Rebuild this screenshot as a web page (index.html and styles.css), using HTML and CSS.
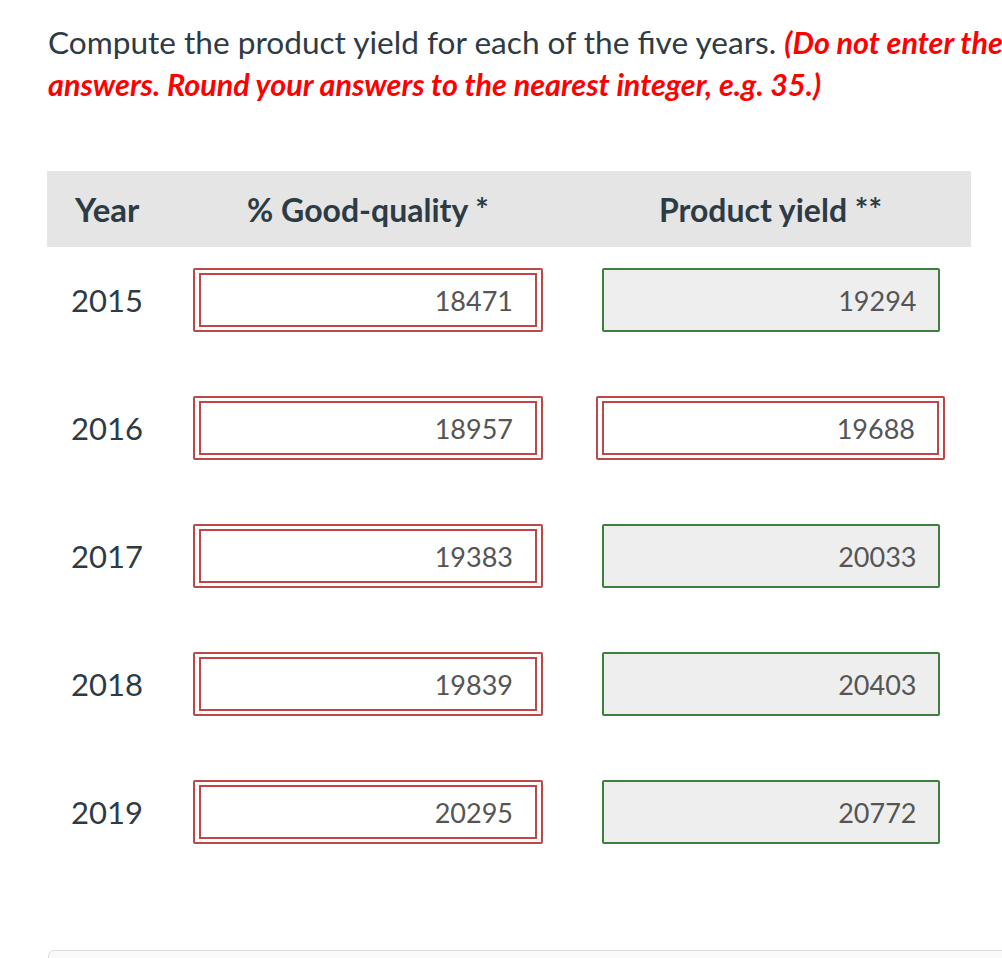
FILE: index.html
```html
<!DOCTYPE html>
<html>
<head>
<meta charset="utf-8">
<link rel="stylesheet" href="styles.css">
</head>
<body>
<div class="page">
  <p class="prompt">Compute the product yield for each of the five years. <strong class="note">(Do not enter the answers. Round your answers to the nearest integer, e.g. 35.)</strong></p>

  <div class="table">
    <div class="row head">
      <div class="c-year">Year</div>
      <div class="c-mid">% Good-quality *</div>
      <div class="c-mid">Product yield **</div>
    </div>

    <div class="row">
      <div class="year">2015</div>
      <div class="wrong"><div class="inner">18471</div></div>
      <div class="right">19294</div>
    </div>
    <div class="row">
      <div class="year">2016</div>
      <div class="wrong"><div class="inner">18957</div></div>
      <div class="wrong"><div class="inner">19688</div></div>
    </div>
    <div class="row">
      <div class="year">2017</div>
      <div class="wrong"><div class="inner">19383</div></div>
      <div class="right">20033</div>
    </div>
    <div class="row">
      <div class="year">2018</div>
      <div class="wrong"><div class="inner">19839</div></div>
      <div class="right">20403</div>
    </div>
    <div class="row">
      <div class="year">2019</div>
      <div class="wrong"><div class="inner">20295</div></div>
      <div class="right">20772</div>
    </div>
  </div>

  <div class="footer-box"></div>
</div>
</body>
</html>
```
FILE: styles.css
```css
html, body {
  margin: 0;
  padding: 0;
  background: #fff;
}
body {
  font-family: Lato, "Open Sans", sans-serif;
  color: #2d3b45;
  overflow: hidden;
}
.page {
  padding: 21px 0 0 48px;
}
.prompt {
  margin: 0;
  width: 970px;
  font-size: 31.6px;
  line-height: 42px;
}
.note {
  color: #ff0000;
  font-style: italic;
  font-weight: 700;
  font-size: 30.5px;
}
.table {
  margin-top: 66px;
  margin-left: -1px;
  width: 924px;
}
.row {
  display: grid;
  grid-template-columns: 146px 350px 53px 349px;
  align-items: center;
  padding: 21px 0 43px;
}
.row > :nth-child(3) {
  grid-column: 4;
}
.row.head {
  background: #e5e5e5;
  height: 76px;
  padding: 0;
  font-weight: 700;
  font-size: 32px;
}
.c-year {
  padding-left: 28px;
  font-size: 33px;
}
.c-mid {
  text-align: center;
}
.year {
  padding-left: 24px;
  font-size: 31px;
}
.wrong {
  box-sizing: border-box;
  height: 64px;
  border: 2px solid #bd4747;
  border-radius: 2px;
  padding: 3px 4px;
}
.inner, .right {
  box-sizing: border-box;
  display: flex;
  align-items: center;
  justify-content: flex-end;
  font-size: 27px;
  color: #555;
}
.inner {
  height: 54px;
  border: 2px solid #bd4747;
  padding-right: 22px;
  background: #fff;
}
.right {
  justify-self: center;
  width: 338px;
  height: 64px;
  border: 2px solid #3e7f3e;
  border-radius: 2px;
  background: #eeeeee;
  padding-right: 21px;
}
.footer-box {
  margin-top: 63px;
  height: 40px;
  border: 1px solid #dcdcdc;
  border-radius: 6px;
  background: #fafafa;
  margin-right: -20px;
}
```
